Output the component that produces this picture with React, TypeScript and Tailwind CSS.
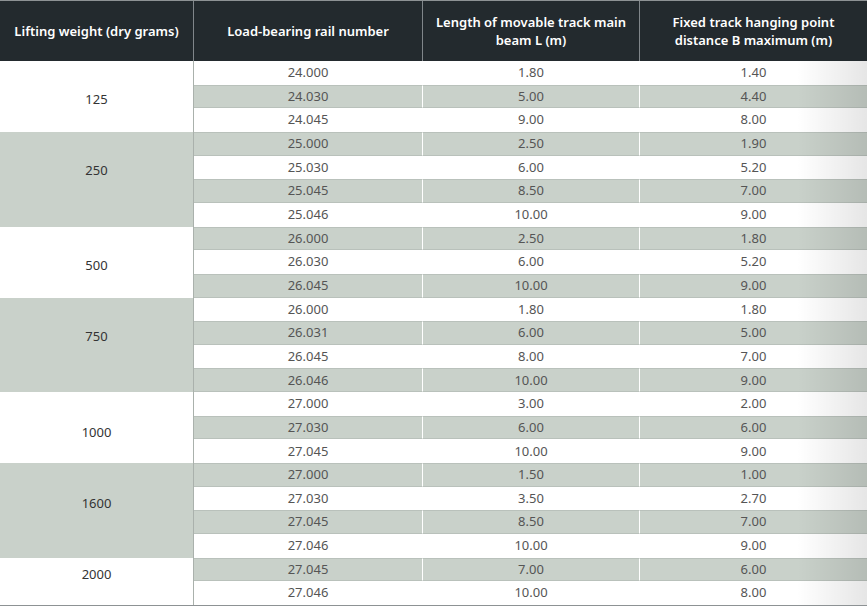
const groups: { weight: string; pad: string; rows: [string, string, string][] }[] = [
  { weight: '125', pad: 'pt-[28px]', rows: [['24.000', '1.80', '1.40'], ['24.030', '5.00', '4.40'], ['24.045', '9.00', '8.00']] },
  { weight: '250', pad: 'pt-[28px]', rows: [['25.000', '2.50', '1.90'], ['25.030', '6.00', '5.20'], ['25.045', '8.50', '7.00'], ['25.046', '10.00', '9.00']] },
  { weight: '500', pad: 'pt-[28px]', rows: [['26.000', '2.50', '1.80'], ['26.030', '6.00', '5.20'], ['26.045', '10.00', '9.00']] },
  { weight: '750', pad: 'pt-[28px]', rows: [['26.000', '1.80', '1.80'], ['26.031', '6.00', '5.00'], ['26.045', '8.00', '7.00'], ['26.046', '10.00', '9.00']] },
  { weight: '1000', pad: 'pt-[30px]', rows: [['27.000', '3.00', '2.00'], ['27.030', '6.00', '6.00'], ['27.045', '10.00', '9.00']] },
  { weight: '1600', pad: 'pt-[30px]', rows: [['27.000', '1.50', '1.00'], ['27.030', '3.50', '2.70'], ['27.045', '8.50', '7.00'], ['27.046', '10.00', '9.00']] },
  { weight: '2000', pad: 'pt-[6px]', rows: [['27.045', '7.00', '6.00'], ['27.046', '10.00', '8.00']] },
]

const headers = [
  'Lifting weight (dry grams)',
  'Load-bearing rail number',
  'Length of movable track main beam L (m)',
  'Fixed track hanging point distance B maximum (m)',
]

export default function App() {
  let idx = 0
  const cells: React.ReactNode[] = []
  groups.forEach((g, gi) => {
    cells.push(
      <div
        key={'w' + gi}
        className={`col-start-1 flex items-start justify-center ${g.pad} leading-[20px] border-r border-[#aab1ac] text-[13px] text-[#333] ${gi % 2 ? 'bg-[#c9d1ca]' : 'bg-white'}`}
        style={{ gridRow: `${idx + 1} / span ${g.rows.length}` }}
      >
        {g.weight}
      </div>
    )
    g.rows.forEach((r) => {
      const gray = idx % 2 === 1
      r.forEach((v, ci) => {
        cells.push(
          <div
            key={`c${idx}-${ci}`}
            className={`flex items-center justify-center text-[13px] text-[#555] ${ci < 2 ? 'border-r border-white' : ''} ${gray ? 'bg-[#c9d1ca] border-y border-y-[#b9c1bb]' : 'bg-white'}`}
            style={{ gridRow: `${idx + 1}`, gridColumn: `${ci + 2}` }}
          >
            {v}
          </div>
        )
      })
      idx++
    })
  })

  return (
    <div className="w-[868px] h-[606px] bg-white font-['Noto_Sans','Open_Sans',sans-serif] overflow-hidden">
      <div className="w-[867px] h-[606px] border-y border-[#8d9294] flex flex-col">
        <div className="grid grid-cols-[194px_229px_217px_1fr] h-[60px] bg-[#232a2e] shrink-0">
          {headers.map((h, i) => (
            <div
              key={i}
              className={`flex items-center justify-center text-center px-2 text-[13px] leading-[18px] font-semibold text-white ${i < 3 ? 'border-r border-[#80868a]' : ''}`}
            >
              {h}
            </div>
          ))}
        </div>
        <div className="relative flex-1 grid grid-cols-[194px_229px_217px_1fr] grid-rows-[repeat(23,1fr)]">
          {cells}
          <div className="pointer-events-none absolute right-0 top-0 bottom-0 w-[70px] bg-gradient-to-r from-transparent to-black/10" />
        </div>
      </div>
    </div>
  )
}
